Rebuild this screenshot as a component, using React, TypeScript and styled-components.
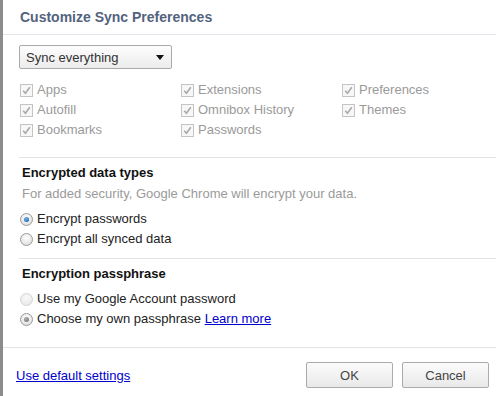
import styled, { createGlobalStyle } from 'styled-components'

const Global = createGlobalStyle`
  html, body {
    margin: 0;
    padding: 0;
    background: #fff;
  }
  body {
    font-family: 'Liberation Sans', Arial, sans-serif;
    font-size: 13px;
    color: #222;
  }
`

const Page = styled.div`
  display: flex;
  width: 496px;
  height: 396px;
  overflow: hidden;
`

const Backdrop = styled.div`
  width: 3px;
  background: #8c8c8c;
  flex-shrink: 0;
`

const Dialog = styled.div`
  flex: 1;
  min-width: 0;
  display: flex;
  flex-direction: column;
  background: #fff;
`

const Header = styled.div`
  height: 34px;
  display: flex;
  align-items: center;
  padding-left: 17px;
  border-bottom: 1px solid #e4e4ec;
`

const Title = styled.h1`
  margin: 0;
  font-size: 14px;
  font-weight: bold;
  color: #53637e;
`

const Body = styled.div`
  flex: 1;
  padding-left: 16px;
`

const SelectBox = styled.div`
  margin-top: 10px;
  width: 153px;
  height: 24px;
  box-sizing: border-box;
  border: 1px solid #aaa;
  border-radius: 2px;
  background: linear-gradient(#fdfdfd, #ececec);
  display: flex;
  align-items: center;
  justify-content: space-between;
  padding: 0 7px 0 6px;
  font-size: 13px;
  color: #333;
`

const Arrow = styled.span`
  width: 0;
  height: 0;
  border-left: 4px solid transparent;
  border-right: 4px solid transparent;
  border-top: 5px solid #111;
`

const CheckGrid = styled.div`
  margin-top: 11px;
  display: grid;
  grid-template-columns: 161px 161px 1fr;
  grid-auto-rows: 20px;
`

const Option = styled.label<{ $muted?: boolean }>`
  display: flex;
  align-items: center;
  gap: 4px;
  padding-left: 1px;
  color: ${(p) => (p.$muted ? '#9a9a9a' : '#222')};
  font-size: 13px;
  line-height: 20px;
`

const Box = styled.span`
  width: 11px;
  height: 11px;
  border: 1px solid #c4c4c4;
  background: #f7f7f7;
  display: flex;
  align-items: center;
  justify-content: center;
  flex-shrink: 0;
`

const Radio = styled.span<{ $on?: boolean; $tone?: 'blue' | 'gray' | 'faint' }>`
  width: 11px;
  height: 11px;
  border-radius: 50%;
  flex-shrink: 0;
  border: 1px solid ${(p) => (p.$tone === 'faint' ? '#d4d4d4' : '#9a9a9a')};
  background: ${(p) =>
    p.$tone === 'faint'
      ? 'radial-gradient(circle at 50% 35%, #fafafa, #e4e4e4)'
      : 'radial-gradient(circle at 50% 35%, #ffffff, #d8d8d8)'};
  display: flex;
  align-items: center;
  justify-content: center;

  &::after {
    content: '';
    display: ${(p) => (p.$on ? 'block' : 'none')};
    width: 5px;
    height: 5px;
    border-radius: 50%;
    background: ${(p) =>
      p.$tone === 'blue'
        ? 'radial-gradient(circle at 40% 35%, #6fb8f0, #0b4f9a)'
        : 'radial-gradient(circle at 40% 35%, #b0b0b0, #6a6a6a)'};
  }
`

const Section = styled.div<{ $gap: number }>`
  margin-top: ${(p) => p.$gap}px;
  border-top: 1px solid #e3e3e3;
  padding-top: 5px;
  padding-left: 3px;
`

const Heading = styled.div`
  font-weight: bold;
  font-size: 13px;
  line-height: 20px;
  color: #111;
`

const Note = styled.div`
  margin-top: 1px;
  line-height: 20px;
  color: #9a9a9a;
`

const RadioList = styled.div`
  margin-top: 5px;
  margin-left: -3px;
  display: flex;
  flex-direction: column;
`

const Link = styled.a`
  color: #0000cc;
  text-decoration: underline;
  cursor: pointer;
`

const Footer = styled.div`
  height: 34px;
  border-top: 1px solid #e3e3e3;
  display: flex;
  align-items: flex-start;
  justify-content: space-between;
  padding: 14px 7px 0 13px;
  box-sizing: content-box;
`

const FooterLink = styled(Link)`
  margin-top: 6px;
`

const Buttons = styled.div`
  display: flex;
  gap: 9px;
`

const Button = styled.button`
  width: 87px;
  height: 26px;
  border: 1px solid #ababab;
  border-radius: 2px;
  background: linear-gradient(#fbfbfb, #e9e9e9);
  font-family: 'Liberation Sans', Arial, sans-serif;
  font-size: 13px;
  color: #444;
  padding: 0;
`

const Check = () => (
  <svg width="9" height="9" viewBox="0 0 9 9">
    <path d="M1.2 4.8 L3.4 7.2 L7.8 1.2" fill="none" stroke="#a9a9a9" strokeWidth="1.6" />
  </svg>
)

const dataTypes = [
  'Apps',
  'Extensions',
  'Preferences',
  'Autofill',
  'Omnibox History',
  'Themes',
  'Bookmarks',
  'Passwords',
]

export default function App() {
  return (
    <Page>
      <Global />
      <Backdrop />
      <Dialog>
        <Header>
          <Title>Customize Sync Preferences</Title>
        </Header>
        <Body>
          <SelectBox>
            <span>Sync everything</span>
            <Arrow />
          </SelectBox>
          <CheckGrid>
            {dataTypes.map((t) => (
              <Option key={t} $muted>
                <Box>
                  <Check />
                </Box>
                {t}
              </Option>
            ))}
          </CheckGrid>

          <Section $gap={17}>
            <Heading>Encrypted data types</Heading>
            <Note>For added security, Google Chrome will encrypt your data.</Note>
            <RadioList>
              <Option>
                <Radio $on $tone="blue" />
                Encrypt passwords
              </Option>
              <Option>
                <Radio $tone="gray" />
                Encrypt all synced data
              </Option>
            </RadioList>
          </Section>

          <Section $gap={9}>
            <Heading>Encryption passphrase</Heading>
            <RadioList>
              <Option>
                <Radio $tone="faint" />
                Use my Google Account password
              </Option>
              <Option>
                <Radio $on $tone="gray" />
                <span>
                  Choose my own passphrase <Link>Learn more</Link>
                </span>
              </Option>
            </RadioList>
          </Section>
        </Body>
        <Footer>
          <FooterLink>Use default settings</FooterLink>
          <Buttons>
            <Button>OK</Button>
            <Button>Cancel</Button>
          </Buttons>
        </Footer>
      </Dialog>
    </Page>
  )
}
